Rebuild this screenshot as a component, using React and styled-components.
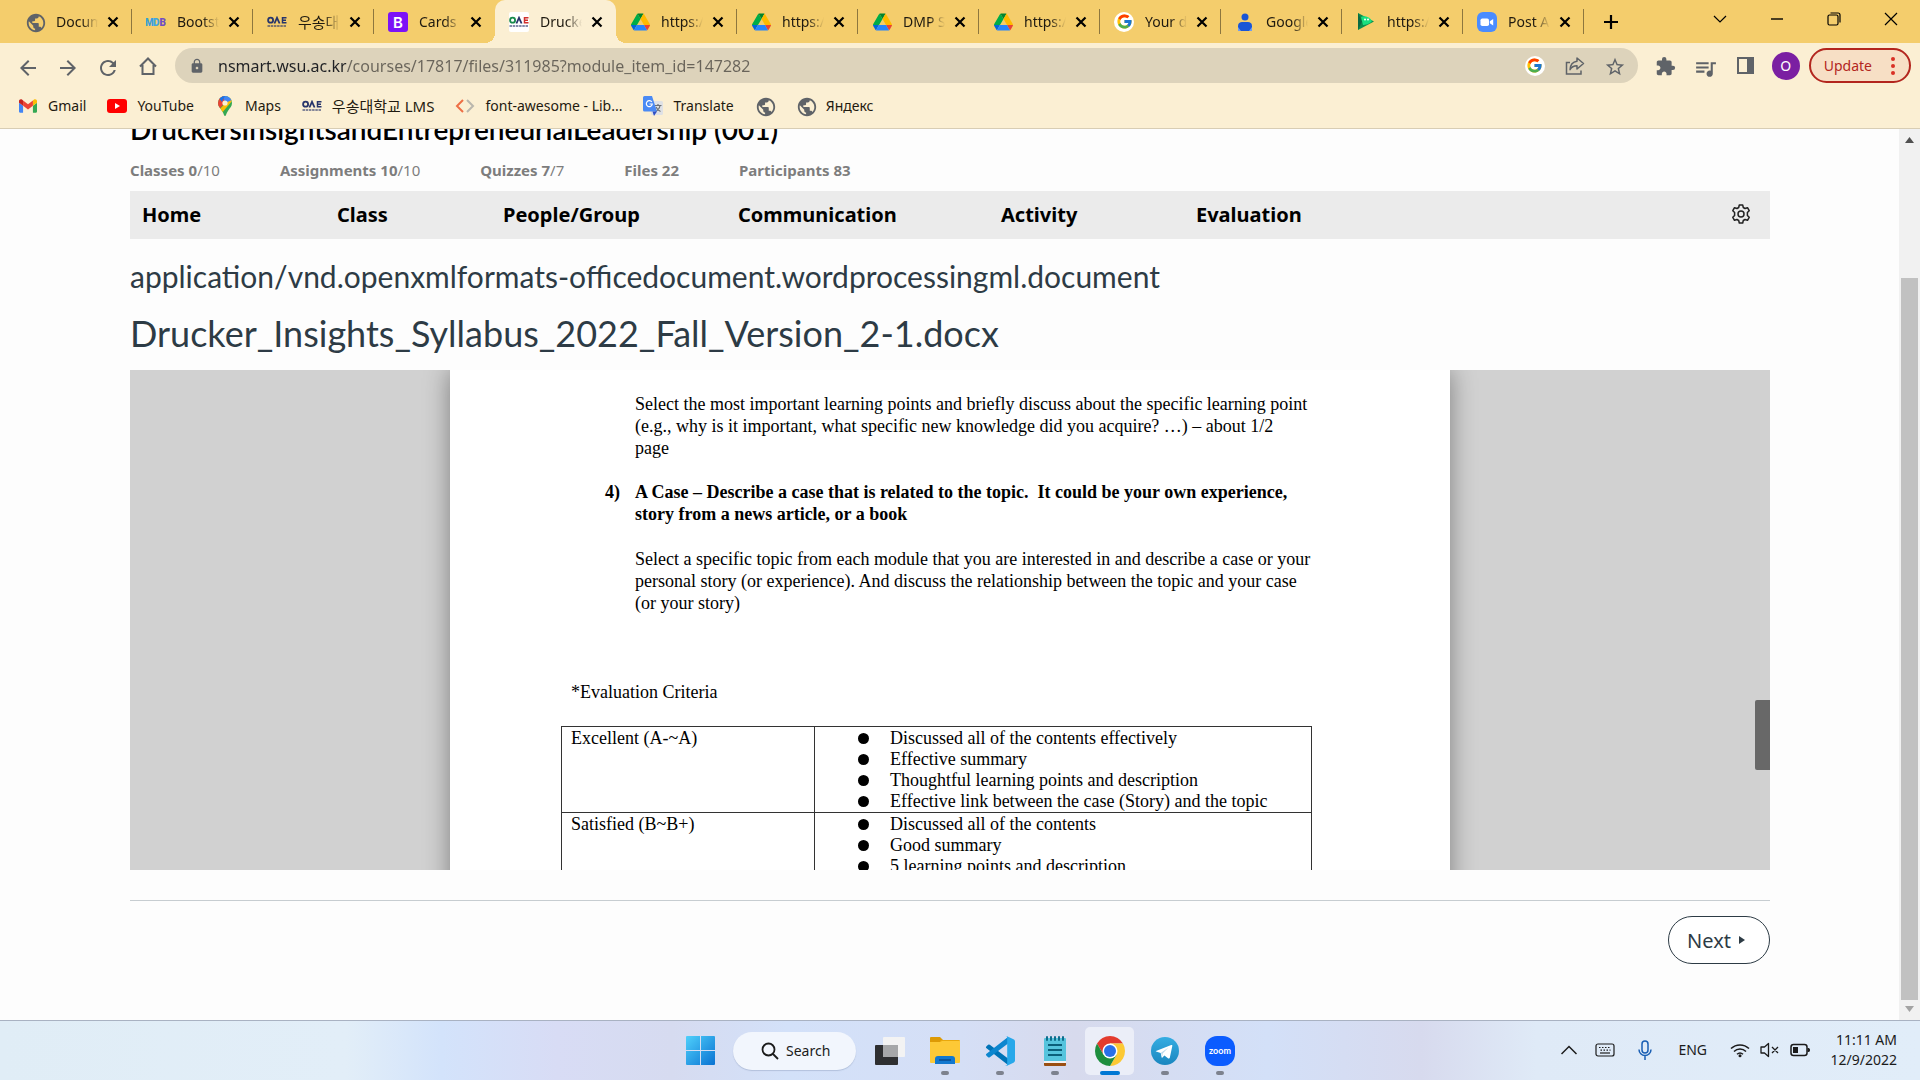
import React from "react";
import styled, { createGlobalStyle, css } from "styled-components";
import { FcGoogle } from "react-icons/fc";
import {
  MdArrowBack,
  MdArrowForward,
  MdRefresh,
  MdLock,
  MdStarBorder,
  MdExtension,
  MdQueueMusic,
  MdPublic,
} from "react-icons/md";

const GlobalStyle = createGlobalStyle`
  *, *::before, *::after { box-sizing: border-box; }
  body { margin: 0; background: #fdfdfd; overflow: hidden; }
  button, input { font: inherit; color: inherit; border: 0; background: none; padding: 0; margin: 0; }
  a { color: inherit; text-decoration: none; }
  svg { display: block; flex: none; }
  h1, h2, p, ul { margin: 0; padding: 0; font-weight: inherit; }
`;

const ui = css`
  font-family: "Noto Sans", "Noto Sans CJK KR", sans-serif;
  font-size: 14px;
`;

/* ---------- window shell ---------- */

const Window = styled.div`
  ${ui}
  display: flex;
  flex-direction: column;
  height: 100vh;
  color: #1f1a10;
`;

const TabStrip = styled.div`
  display: flex;
  align-items: stretch;
  height: 43px;
  padding: 0 1px 0 11px;
  background: #f4cd6c;
`;

const Tab = styled.div`
  position: relative;
  display: flex;
  align-items: center;
  flex: 0 1 121px;
  min-width: 0;
  padding-left: 14px;
  gap: 5px;
  ${(p) =>
    p.$active &&
    css`
      background: #fbefd3;
      border-radius: 10px 10px 0 0;
      &::before,
      &::after {
        content: "";
        position: absolute;
        bottom: 0;
        width: 10px;
        height: 10px;
      }
      &::before {
        left: -10px;
        background: radial-gradient(circle at 0 0, transparent 10px, #fbefd3 10px);
      }
      &::after {
        right: -10px;
        background: radial-gradient(circle at 100% 0, transparent 10px, #fbefd3 10px);
      }
    `}
`;

const TabButton = styled.button`
  display: flex;
  align-items: center;
  gap: 11px;
`;

const TabTitle = styled.span`
  width: 42px;
  overflow: hidden;
  white-space: nowrap;
  text-align: left;
  line-height: 24px;
  mask-image: linear-gradient(90deg, #000 26px, transparent 42px);
  &:lang(ko) {
    font-size: 15px;
  }
`;

const Favicon = styled.span`
  display: grid;
  place-items: center;
  flex: none;
  width: 20px;
  height: 20px;
  border-radius: ${(p) => (p.$round ? "10px" : "2px")};
  background: ${(p) => (p.$white ? "#fff" : "none")};
`;

const IconButton = styled.button`
  display: grid;
  place-items: center;
  flex: none;
  width: ${(p) => p.$w || 20}px;
  height: ${(p) => p.$h || 20}px;
  color: ${(p) => p.$color || "#5f6368"};
`;

const TabDivider = styled.span`
  width: 1px;
  height: 25px;
  margin-left: auto;
  background: #8d763e;
`;

const NewTab = styled(IconButton)`
  width: 54px;
  height: 43px;
`;

const WindowControls = styled.div`
  display: flex;
  margin-left: auto;
  height: 37px;
`;

/* ---------- toolbar ---------- */

const Toolbar = styled.div`
  display: flex;
  align-items: center;
  height: 45px;
  padding: 0 9px 0 8px;
  background: #fbefd3;
`;

const AddressBar = styled.label`
  display: flex;
  align-items: center;
  flex: 1;
  height: 35px;
  margin-left: 7px;
  padding: 0 3px 0 14px;
  border-radius: 18px;
  background: #ddd3bb;
  color: #5f6368;
`;

const AddressInput = styled.input`
  flex: 1;
  min-width: 0;
  margin-left: 13px;
  font-size: 16px;
  line-height: 24px;
  background: linear-gradient(90deg, #202124 128px, #69645a 128px);
  background-clip: text;
  -webkit-background-clip: text;
  color: transparent;
  outline: none;
`;

const AddressActions = styled.div`
  display: flex;
  align-items: center;
  padding-left: 10px;
`;

const ToolbarActions = styled.div`
  display: flex;
  align-items: center;
  margin-left: 8px;
`;

const Avatar = styled.button`
  width: 28px;
  height: 28px;
  margin: 0 9px 0 6px;
  border-radius: 14px;
  background: #7b1fa2;
  color: #fff;
  font-size: 14px;
`;

const UpdateButton = styled.button`
  display: flex;
  align-items: center;
  gap: 18px;
  height: 35px;
  padding: 0 13px;
  border: 2px solid #b3261e;
  border-radius: 18px;
  background: #f7dfc5;
  color: #b3261e;
`;

const Bookmarks = styled.nav`
  display: flex;
  align-items: center;
  gap: 21px;
  height: 41px;
  padding: 0 18px 4px;
  background: #fbefd3;
  border-bottom: 1px solid #d8cdb4;
`;

const Bookmark = styled.a`
  display: flex;
  align-items: center;
  gap: 10px;
  height: 24px;
  line-height: 24px;
  white-space: nowrap;
  color: #1f1a10;
  &:lang(ko) {
    font-size: 15px;
  }
`;

/* ---------- page ---------- */

const Viewport = styled.div`
  display: flex;
  flex: 1;
  min-height: 0;
  overflow: hidden;
  background: #fdfdfd;
`;

const Page = styled.main`
  flex: 1;
  min-width: 0;
  padding: 0 129px 0 130px;
`;

const CourseTitle = styled.h1`
  margin-top: -17px;
  font: 600 28px/34px Lato, sans-serif;
  color: #000;
`;

const Stats = styled.ul`
  display: flex;
  gap: 60px;
  margin-top: 12px;
  list-style: none;
  font-size: 15px;
  line-height: 24px;
  color: #7d7d7d;
`;

const CourseNav = styled.nav`
  display: flex;
  align-items: center;
  height: 48px;
  margin-top: 9px;
  padding: 0 18px 2px 12px;
  background: #ebebeb;
`;

const NavLink = styled.a`
  width: ${(p) => p.$w}px;
  font-size: 20px;
  font-weight: 700;
  color: #000;
`;

const SettingsButton = styled(IconButton)`
  margin-left: auto;
  width: 22px;
`;

const MimeHeading = styled.h2`
  margin-top: 19px;
  font: 400 30px/36px Lato, sans-serif;
  color: #2d3b45;
`;

const FileHeading = styled.h2`
  margin-top: 17px;
  font: 400 36px/44px Lato, sans-serif;
  color: #2d3b45;
`;

const Viewer = styled.section`
  position: relative;
  display: flex;
  justify-content: center;
  height: 500px;
  margin-top: 15px;
  overflow: hidden;
  background: #d1d1d1;
`;

const ViewerThumb = styled.div`
  position: absolute;
  right: 0;
  top: 330px;
  width: 15px;
  height: 70px;
  border-radius: 2px 0 0 2px;
  background: #686868;
`;

const Sheet = styled.article`
  flex: 0 1 1000px;
  height: 600px;
  padding: 23px 111px 0;
  background: #fff;
  box-shadow: 0 0 24px rgba(0, 0, 0, 0.4);
  font: 18px/22px "Liberation Serif", serif;
  color: #000;
`;

const Paragraph = styled.p`
  margin: 0 0 22px 74px;
  white-space: pre-wrap;
`;

const CaseItem = styled.div`
  display: grid;
  grid-template-columns: 30px 1fr;
  margin: 0 0 23px 44px;
  font-weight: 700;
  white-space: pre-wrap;
`;

const CriteriaLabel = styled.p`
  margin: 67px 0 23px 10px;
`;

const CriteriaTable = styled.table`
  width: 750px;
  table-layout: fixed;
  border-collapse: collapse;
  line-height: 21px;
`;

const Cell = styled.td`
  width: ${(p) => p.$w}px;
  padding: 1px 0 0 ${(p) => p.$pad}px;
  border: 1px solid #333;
  vertical-align: top;
`;

const Points = styled.ul`
  list-style: none;
`;

const Point = styled.li`
  display: flex;
  align-items: center;
  gap: 21px;
  &::before {
    content: "";
    width: 11px;
    height: 11px;
    border-radius: 6px;
    background: #000;
  }
`;

const Footer = styled.footer`
  display: flex;
  justify-content: flex-end;
  margin-top: 30px;
  padding-top: 15px;
  border-top: 1px solid #c7cdd1;
`;

const NextButton = styled.button`
  display: flex;
  align-items: center;
  gap: 8px;
  height: 48px;
  padding: 0 24px 0 18px;
  border: 1px solid #2d3b45;
  border-radius: 24px;
  background: #fff;
  font-size: 20px;
  color: #2d3b45;
`;

const ScrollTrack = styled.div`
  display: flex;
  flex-direction: column;
  align-items: center;
  width: 21px;
  padding: 8px 0;
  background: #f1f1f1;
`;

const ScrollThumb = styled.div`
  flex: 1;
  width: 17px;
  margin: 135px 0 6px;
  background: #c1c1c1;
`;

/* ---------- taskbar ---------- */

const Taskbar = styled.footer`
  display: grid;
  grid-template-columns: 1fr auto 1fr;
  height: 60px;
  border-top: 1px solid #a9b2c2;
  background: linear-gradient(90deg, #e0edf6 0%, #e2eef8 18%, #d3e3fb 23%, #d8dcf5 29%, #d6dbf0 35%, #d3e1f9 41%, #d5dff6 50%, #d7daed 56%, #d3e0f8 66%, #d7daee 74%, #dfeaf7 80%, #e1edf9 100%);
  color: #1b1b1b;
`;

const Apps = styled.div`
  grid-column: 2;
  display: flex;
  align-items: center;
`;

const AppButton = styled.button`
  position: relative;
  display: grid;
  place-items: center;
  width: 49px;
  height: 48px;
  margin: 0 3px;
  border-radius: 5px;
  background: ${(p) => (p.$active ? "#ebeef8" : "none")};
  ${(p) =>
    p.$running &&
    css`
      &::after {
        content: "";
        position: absolute;
        left: 50%;
        bottom: 0;
        width: ${p.$active ? 20 : 8}px;
        height: 4px;
        border-radius: 2px;
        transform: translateX(-50%);
        background: ${p.$active ? "#0078d4" : "#7d828e"};
      }
    `}
`;

const SearchButton = styled.button`
  display: flex;
  align-items: center;
  gap: 7px;
  width: 123px;
  height: 38px;
  margin: 0 6px 0 5px;
  padding-left: 28px;
  border-radius: 19px;
  background: #f2f6fd;
  box-shadow: 0 1px 1px rgba(80, 100, 140, 0.25);
`;

const Tray = styled.div`
  grid-column: 3;
  display: flex;
  align-items: center;
  justify-content: flex-end;
  padding: 0 23px 2px 0;
`;

const TrayButton = styled.button`
  display: flex;
  align-items: center;
  justify-content: center;
  gap: 10px;
  height: 40px;
  margin-right: ${(p) => p.$gap}px;
`;

const Clock = styled.button`
  width: 68px;
  text-align: right;
  line-height: 20px;
  white-space: nowrap;
`;

/* ---------- drawings ---------- */

const Stroke = ({ w = 20, h = w, box = "0 0 20 20", sw = 1, children, ...rest }) => (
  <svg width={w} height={h} viewBox={box} fill="none" stroke="currentColor" strokeWidth={sw} aria-hidden="true" {...rest}>
    {children}
  </svg>
);

const DriveIcon = () => (
  <svg width="19" height="18" viewBox="0 0 87.3 78" aria-hidden="true">
    <path fill="#0066da" d="m6.6 66.85 3.85 6.65c.8 1.4 1.95 2.5 3.3 3.3l13.75-23.8h-27.5c0 1.55.4 3.1 1.2 4.5z" />
    <path fill="#00ac47" d="m43.65 25-13.75-23.8c-1.35.8-2.5 1.9-3.3 3.3l-25.4 44a9.06 9.06 0 0 0-1.2 4.5h27.5z" />
    <path fill="#ea4335" d="m73.55 76.8c1.35-.8 2.5-1.9 3.3-3.3l1.6-2.75 7.65-13.25c.8-1.4 1.2-2.95 1.2-4.5h-27.5l5.85 11.5z" />
    <path fill="#00832d" d="m43.65 25 13.75-23.8c-1.35-.8-2.9-1.2-4.5-1.2h-18.5c-1.6 0-3.15.45-4.5 1.2z" />
    <path fill="#2684fc" d="m59.8 53h-32.3l-13.75 23.8c1.35.8 2.9 1.2 4.5 1.2h50.8c1.6 0 3.15-.45 4.5-1.2z" />
    <path fill="#ffba00" d="m73.4 26.5-12.7-22c-.8-1.4-1.95-2.5-3.3-3.3l-13.75 23.8 16.15 28h27.45c0-1.55-.4-3.1-1.2-4.5z" />
  </svg>
);

const GmailIcon = () => (
  <svg width="18" height="14" viewBox="52 42 88 66" aria-hidden="true">
    <path fill="#4285f4" d="M58 108h14V74L52 59v43c0 3.32 2.69 6 6 6" />
    <path fill="#34a853" d="M120 108h14c3.32 0 6-2.69 6-6V59l-20 15" />
    <path fill="#fbbc04" d="M120 48v26l20-15v-8c0-7.42-8.47-11.65-14.4-7.2" />
    <path fill="#ea4335" d="M72 74V48l24 18 24-18v26L96 92" />
    <path fill="#c5221f" d="M52 51v8l20 15V48l-5.6-4.2c-5.94-4.45-14.4-.22-14.4 7.2" />
  </svg>
);

const YouTubeIcon = () => (
  <svg width="20" height="14" viewBox="0 0 20 14" aria-hidden="true">
    <rect width="20" height="14" rx="3" fill="#f00" />
    <path d="M8 4l5 3-5 3z" fill="#fff" />
  </svg>
);

const MapsIcon = () => (
  <svg width="14" height="20" viewBox="0 0 14 20" aria-hidden="true">
    <clipPath id="pin">
      <path d="M7 0a7 7 0 0 1 7 7c0 3.2-2 5-3.600 7.200C9.200 16 8.400 17.500 8 19c-.3 1.300-1.700 1.300-2 0-.4-1.500-1.200-3-2.400-4.800C2 12 0 10.200 0 7a7 7 0 0 1 7-7z" />
    </clipPath>
    <g clipPath="url(#pin)">
      <path d="M0 0h14v20H0z" fill="#34a853" />
      <path d="M0 15L14 0v5L3 18z" fill="#fbbc04" />
      <path d="M4 0h10v4L7 7z" fill="#4285f4" />
      <path d="M0 0h5l2 7-5 5-4-2z" fill="#ea4335" />
      <path d="M1 2L5 0h2l-3 6z" fill="#1a73e8" />
    </g>
    <circle cx="7" cy="7" r="2.600" fill="#fbefd3" />
  </svg>
);

const SchoolIcon = ({ colors = ["#27356b", "#27356b", "#27356b"] }) => (
  <svg width="20" height="12" viewBox="0 0 20 12" aria-hidden="true">
    <g fill="none" strokeWidth="1.800">
      <circle cx="3.600" cy="4.200" r="2.500" stroke={colors[0]} />
      <path d="M7.400 7.500L10 1.800l2.600 5.700" stroke={colors[1]} />
      <path d="M19.500 1.800h-4v5h4M15.500 4.300h3.500" stroke={colors[2]} strokeWidth="1.500" />
    </g>
    <path d="M0.500 10h19" stroke="#27356b" strokeWidth="1.500" strokeDasharray="2.500 .7" opacity=".75" />
  </svg>
);

const MdbIcon = () => (
  <svg width="20" height="12" viewBox="0 0 20 12" fontFamily="Roboto, sans-serif" fontWeight="900" fontSize="10" aria-hidden="true">
    <text x="-1" y="10" fill="#3b9fd8">M</text>
    <text x="7" y="10" fill="#3fa6e0">D</text>
    <text x="13.500" y="10" fill="#6f4fc4">B</text>
  </svg>
);

const BootstrapIcon = () => (
  <svg width="20" height="20" viewBox="0 0 20 20" aria-hidden="true">
    <rect width="20" height="20" rx="3" fill="#7c12f7" />
    <text x="10" y="15.500" textAnchor="middle" fill="#fff" fontFamily="Inter, sans-serif" fontWeight="600" fontSize="15">B</text>
  </svg>
);

const PersonIcon = () => (
  <svg width="16" height="18" viewBox="0 0 16 18" aria-hidden="true">
    <circle cx="8" cy="4" r="3.500" fill="#1a56d6" />
    <path d="M1 18v-5c0-3 2-4 4-4h6c2 0 4 1 4 4v5z" fill="#1a56d6" />
    <path d="M1 14l3 4H1zM15 14l-3 4h3z" fill="#6f9df2" />
  </svg>
);

const PlayIcon = () => (
  <svg width="18" height="19" viewBox="0 0 18 19" aria-hidden="true">
    <path d="M1 1v17L17 9.500z" fill="#0b8f4d" />
    <path d="M1 1l4 8.500L1 18z" fill="#0a6b43" />
    <path d="M4 5c3-2 9 0 11 4-2 3-7 4-9 4z" fill="#18e07f" />
    <circle cx="8" cy="7.500" r="1" fill="#fff" />
    <circle cx="11" cy="7.500" r="1" fill="#fff" />
  </svg>
);

const ZoomCamIcon = () => (
  <svg width="20" height="20" viewBox="0 0 20 20" aria-hidden="true">
    <rect width="20" height="20" rx="6" fill="#4a8cff" />
    <rect x="3.500" y="6.500" width="8.500" height="7.500" rx="1.800" fill="#fff" />
    <path d="M12.800 9.300l3.400-2.300v6.500l-3.400-2.300z" fill="#fff" />
  </svg>
);

const CodeIcon = () => (
  <svg width="20" height="14" viewBox="0 0 20 14" fill="none" strokeWidth="2" aria-hidden="true">
    <path d="M8 1L2 7l6 6" stroke="#ee6f45" />
    <path d="M12 1l6 6-6 6" stroke="#b9b6ad" />
  </svg>
);

const TranslateIcon = () => (
  <svg width="20" height="20" viewBox="0 0 20 20" aria-hidden="true">
    <rect x="8" y="5" width="12" height="14" rx="1.500" fill="#dfe1e5" />
    <path d="M12 9.500h6.500M15 8v1.500M17 9.500c-.5 3-2.500 5-4.500 6M13 11c1 2 3 4 4.500 4.500" stroke="#6b7075" strokeWidth="1.200" fill="none" />
    <path d="M1.500 0H9l5 15.500H1.500A1.500 1.500 0 0 1 0 14V1.500A1.500 1.500 0 0 1 1.500 0z" fill="#4a8af4" />
    <path d="M9.500 15.500H14L11 20z" fill="#2f4fc4" />
    <path d="M8.800 6A3 3 0 1 0 9.300 8H6.500" stroke="#fff" strokeWidth="1.200" fill="none" />
  </svg>
);

const HomeIcon = () => (
  <Stroke w={20} sw={2}>
    <path d="M2 10.500L10 2.500l8 8M4.500 9v9h11V9" />
  </Stroke>
);

const ShareIcon = () => (
  <Stroke w={20} sw={1.5}>
    <path d="M5 6.500H1.500V18H16v-3.500" />
    <path d="M12 2l6.500 5.500L12 13v-3.300c-3.500 0-5.500 1-7 4 .3-5 3-8 7-8.500z" strokeLinejoin="round" />
  </Stroke>
);

const PanelIcon = () => (
  <svg width="19" height="19" viewBox="0 0 19 19" aria-hidden="true">
    <path fillRule="evenodd" d="M1 1h17v17H1zM3 3v13h8V3z" fill="#5f6368" />
  </svg>
);

const GearIcon = () => (
  <Stroke w={20} sw={1.5} strokeLinejoin="round">
    <circle cx="10" cy="10" r="3" />
    <path d="M8.300 1h3.400l.6 2.500 1.700 1 2.500-.8 1.700 3-1.800 1.800v2.900l1.800 1.900-1.700 3-2.500-.8-1.700 1-.6 2.500H8.300l-.6-2.500-1.700-1-2.500.8-1.700-3 1.800-1.900V8.500L1.800 6.700l1.700-3 2.500.8 1.700-1z" />
  </Stroke>
);

const WindowsIcon = () => (
  <svg width="29" height="29" viewBox="0 0 29 29" aria-hidden="true">
    <linearGradient id="win" x1="0" y1="0" x2="1" y2="1">
      <stop offset="0" stopColor="#4fd0fb" />
      <stop offset="1" stopColor="#0a72d2" />
    </linearGradient>
    <path fill="url(#win)" d="M1 0h13v14H0V1a1 1 0 0 1 1-1zM15 0h13a1 1 0 0 1 1 1v13H15zM0 15h14v14H1a1 1 0 0 1-1-1zM15 15h14v13a1 1 0 0 1-1 1H15z" />
  </svg>
);

const TaskViewIcon = () => (
  <svg width="30" height="28" viewBox="0 0 30 28" aria-hidden="true">
    <rect x="0" y="8" width="23" height="20" rx="1" fill="#2e2f31" />
    <rect x="8" y="0" width="22" height="20" rx="1" fill="#f3f3f3" />
    <path d="M8 8h15v12H8z" fill="#a6a7a9" />
  </svg>
);

const FolderIcon = () => (
  <svg width="30" height="27" viewBox="0 0 30 27" aria-hidden="true">
    <path d="M1 0h9l3 3v3H0V1a1 1 0 0 1 1-1z" fill="#dd9a05" />
    <path d="M11 3h18a1 1 0 0 1 1 1v4H8z" fill="#e9a80c" />
    <path d="M0 5h10l2-1h18v21a1 1 0 0 1-1 1H1a1 1 0 0 1-1-1z" fill="#fdc936" />
    <path d="M5 27v-5a3 3 0 0 1 3-3h14a3 3 0 0 1 3 3v5z" fill="#1278cf" />
    <path d="M9 23h12" stroke="#0a4a8c" strokeWidth="1.500" />
  </svg>
);

const CodeEditorIcon = () => (
  <svg width="30" height="30" viewBox="0 0 30 30" aria-hidden="true">
    <path d="M1.300 10.500l1.800-1.700a1.300 1.300 0 0 1 1.700 0L23 22.500V29L1.200 11.900a1 1 0 0 1 .1-1.400z" fill="#0073b7" />
    <path d="M1.300 19.500l1.800 1.700a1.300 1.300 0 0 0 1.700 0L23 7.500V1L1.200 18.100a1 1 0 0 0 .1 1.400z" fill="#0c86cf" />
    <path d="M22 .3L28.500 3.300A2.500 2.500 0 0 1 30 5.500v19a2.500 2.500 0 0 1-1.500 2.200L22 29.800c-.7.3-1.500.1-2-.4 1 .7 2.200 0 2.200-1.200V1.800C22.200.6 21 0 20 .6c.5-.5 1.300-.6 2-.3z" fill="#28a8ea" />
  </svg>
);

const NotepadIcon = () => (
  <svg width="22" height="30" viewBox="0 0 22 30" aria-hidden="true">
    <rect x="0" y="26" width="22" height="4" rx="1" fill="#9a4f12" />
    <rect x="0" y="24" width="22" height="3" fill="#f2f2f2" />
    <path d="M0 3a1 1 0 0 1 1-1h20a1 1 0 0 1 1 1v22H0z" fill="#56c4dd" />
    <path d="M4 9h14M4 14h14M4 19h14" stroke="#0b5f7a" strokeWidth="2" />
    <path d="M3 1v3M7 1v3M11 1v3M15 1v3M19 1v3" stroke="#0e6d8c" strokeWidth="2" strokeLinecap="round" />
  </svg>
);

const ChromeIcon = () => (
  <svg width="30" height="30" viewBox="2 2 44 44" aria-hidden="true">
    <path fill="#e33b2e" d="M4.950 13A22 22 0 0 1 43.050 13H24v11l-9.530 5.500z" />
    <path fill="#fcc934" d="M43.050 13A22 22 0 0 1 24 46l9.530-16.500L24 24V13z" />
    <path fill="#1e8e3e" d="M24 46A22 22 0 0 1 4.950 13l9.520 16.500L24 24l9.530 5.500z" />
    <circle cx="24" cy="24" r="11" fill="#fff" />
    <circle cx="24" cy="24" r="8.800" fill="#2a70e8" />
  </svg>
);

const TelegramIcon = () => (
  <svg width="28" height="28" viewBox="0 0 28 28" aria-hidden="true">
    <linearGradient id="tg" x1="0" y1="0" x2="0" y2="1">
      <stop offset="0" stopColor="#35ade2" />
      <stop offset="1" stopColor="#1a86bf" />
    </linearGradient>
    <circle cx="14" cy="14" r="14" fill="url(#tg)" />
    <path d="M5 14l15.200-6c.8-.3 1.300.2 1.100 1.100l-2.500 11.700c-.2.800-.8 1-1.500.6L13.400 18.500l-1.900 2c-.4.4-.8.3-.9-.3l-.9-4.200L5.100 14.600c-.5-.2-.5-.4-.1-.6z" fill="#fff" />
    <path d="M10 15.800l7.500-5.300-5.900 6-.3 3z" fill="#b9d8ea" />
  </svg>
);

const ZoomIcon = () => (
  <svg width="30" height="30" viewBox="0 0 30 30" aria-hidden="true">
    <rect width="30" height="30" rx="12" fill="#0b5cff" />
    <text x="15" y="18" textAnchor="middle" fill="#fff" fontFamily="Lato, sans-serif" fontWeight="700" fontSize="9">zoom</text>
  </svg>
);

const WifiIcon = () => (
  <Stroke w={20} h={16} box="0 0 20 16" sw={1.5}>
    <path d="M1 6.500a13 13 0 0 1 18 0M4 9.500a8.500 8.500 0 0 1 12 0M7 12.300a4.500 4.500 0 0 1 6 0" />
    <circle cx="10" cy="13.800" r="1.500" fill="currentColor" stroke="none" />
  </Stroke>
);

const SpeakerIcon = () => (
  <Stroke w={20} h={16} box="0 0 20 16" sw={1.3}>
    <path d="M1 5h3.500L8.500 1.500v13L4.500 11H1zM12 5l6 6M18 5l-6 6" strokeLinejoin="round" />
  </Stroke>
);

const BatteryIcon = () => (
  <Stroke w={20} h={14} box="0 0 20 14" sw={1.5}>
    <rect x="1" y="1.500" width="16" height="11" rx="2.500" />
    <path d="M3 4h5v6H3zM17.500 5h1c1 0 1.500 1 1.500 2s-.5 2-1.500 2h-1z" fill="currentColor" stroke="none" />
  </Stroke>
);

const KeyboardIcon = () => (
  <Stroke w={20} h={14} box="0 0 20 14" sw={1.2}>
    <rect x="1" y="1" width="18" height="12" rx="2" />
    <path d="M4 4.500h12M5.500 7.200h10" strokeDasharray="1.500 1.500" />
    <path d="M5 10h10" />
  </Stroke>
);

const MicIcon = () => (
  <Stroke w={14} h={20} box="0 0 14 20" sw={1.5} color="#1a5fb4">
    <rect x="4" y="1" width="6" height="12" rx="3" />
    <path d="M1 9.500a6 6 0 0 0 12 0M7 16v4" />
  </Stroke>
);

/* ---------- data ---------- */

const tabs = [
  { title: "Document", icon: <MdPublic size={22} color="#5f6368" /> },
  { title: "Bootstrap", icon: <MdbIcon /> },
  { title: "우송대학교", lang: "ko", icon: <SchoolIcon /> },
  { title: "Cards ·", icon: <BootstrapIcon /> },
  { title: "Drucker_I", icon: <SchoolIcon colors={["#178a4c", "#27356b", "#d0312d"]} />, white: true, active: true },
  { title: "https://d", icon: <DriveIcon /> },
  { title: "https://d", icon: <DriveIcon /> },
  { title: "DMP Sm", icon: <DriveIcon /> },
  { title: "https://d", icon: <DriveIcon /> },
  { title: "Your dat", icon: <FcGoogle size={17} />, white: true, round: true },
  { title: "Google", icon: <PersonIcon /> },
  { title: "https://p", icon: <PlayIcon /> },
  { title: "Post Att", icon: <ZoomCamIcon /> },
];

const bookmarks = [
  { label: "Gmail", icon: <GmailIcon /> },
  { label: "YouTube", icon: <YouTubeIcon /> },
  { label: "Maps", icon: <MapsIcon /> },
  { label: "우송대학교 LMS", lang: "ko", icon: <SchoolIcon /> },
  { label: "font-awesome - Lib...", icon: <CodeIcon /> },
  { label: "Translate", icon: <TranslateIcon /> },
  { label: "", icon: <MdPublic size={22} color="#5f6368" /> },
  { label: "Яндекс", icon: <MdPublic size={22} color="#5f6368" /> },
];

const stats = [
  ["Classes 0", "/10"],
  ["Assignments 10", "/10"],
  ["Quizzes 7", "/7"],
  ["Files 22", ""],
  ["Participants 83", ""],
];

const navItems = [
  ["Home", 195],
  ["Class", 166],
  ["People/Group", 235],
  ["Communication", 263],
  ["Activity", 195],
  ["Evaluation", 106],
];

const criteria = [
  {
    grade: "Excellent (A-~A)",
    points: [
      "Discussed all of the contents effectively",
      "Effective summary",
      "Thoughtful learning points and description",
      "Effective link between the case (Story) and the topic",
    ],
  },
  {
    grade: "Satisfied (B~B+)",
    points: ["Discussed all of the contents", "Good summary", "5 learning points and description"],
  },
];

const apps = [
  { name: "File Explorer", icon: <FolderIcon />, running: true },
  { name: "Code editor", icon: <CodeEditorIcon />, running: true },
  { name: "Notepad", icon: <NotepadIcon />, running: true },
  { name: "Chrome", icon: <ChromeIcon />, running: true, active: true },
  { name: "Telegram", icon: <TelegramIcon />, running: true },
  { name: "Zoom", icon: <ZoomIcon />, running: true },
];

/* ---------- sections ---------- */

function BrowserTabs() {
  return (
    <TabStrip>
      {tabs.map((t, i) => (
        <Tab key={i} $active={t.active}>
          <TabButton>
            <Favicon $white={t.white} $round={t.round}>{t.icon}</Favicon>
            <TabTitle lang={t.lang}>{t.title}</TabTitle>
          </TabButton>
          <IconButton aria-label="Close tab" $color="#000">
            <Stroke w={12} box="0 0 12 12" sw={2.2}><path d="M1.500 1.500l9 9M10.500 1.500l-9 9" /></Stroke>
          </IconButton>
          {!t.active && !(tabs[i + 1] && tabs[i + 1].active) && <TabDivider />}
        </Tab>
      ))}
      <NewTab aria-label="New tab" $color="#000">
        <Stroke w={16} box="0 0 16 16" sw={2.2}><path d="M8 1v14M1 8h14" /></Stroke>
      </NewTab>
      <WindowControls>
        <IconButton $w={57} $h={37} aria-label="Search tabs" $color="#000">
          <Stroke w={14} box="0 0 14 14" sw={1.2}><path d="M1 4l6 6 6-6" /></Stroke>
        </IconButton>
        <IconButton $w={57} $h={37} aria-label="Minimize" $color="#000">
          <Stroke w={14} box="0 0 14 14" sw={1.4}><path d="M1 7h12" /></Stroke>
        </IconButton>
        <IconButton $w={57} $h={37} aria-label="Restore" $color="#000">
          <Stroke w={14} box="0 0 14 14" sw={1.2}>
            <rect x="1" y="3" width="10" height="10" rx="1.500" />
            <path d="M3.500 1H11a2 2 0 0 1 2 2v7.500" />
          </Stroke>
        </IconButton>
        <IconButton $w={57} $h={37} aria-label="Close" $color="#000">
          <Stroke w={14} box="0 0 14 14" sw={1.2}><path d="M1 1l12 12M13 1L1 13" /></Stroke>
        </IconButton>
      </WindowControls>
    </TabStrip>
  );
}

function BrowserToolbar() {
  return (
    <Toolbar>
      <IconButton $w={40} aria-label="Back"><MdArrowBack size={24} /></IconButton>
      <IconButton $w={40} aria-label="Forward"><MdArrowForward size={24} /></IconButton>
      <IconButton $w={40} aria-label="Reload"><MdRefresh size={24} /></IconButton>
      <IconButton $w={40} aria-label="Home"><HomeIcon /></IconButton>
      <AddressBar>
        <MdLock size={16} />
        <AddressInput
          aria-label="Address"
          defaultValue="nsmart.wsu.ac.kr/courses/17817/files/311985?module_item_id=147282"
        />
        <Favicon $white $round><FcGoogle size={17} /></Favicon>
        <AddressActions>
          <IconButton $w={40} aria-label="Share"><ShareIcon /></IconButton>
          <IconButton $w={40} aria-label="Bookmark"><MdStarBorder size={22} /></IconButton>
        </AddressActions>
      </AddressBar>
      <ToolbarActions>
        <IconButton $w={40} aria-label="Extensions"><MdExtension size={21} /></IconButton>
        <IconButton $w={40} aria-label="Media"><MdQueueMusic size={25} /></IconButton>
        <IconButton $w={40} aria-label="Side panel"><PanelIcon /></IconButton>
        <Avatar>O</Avatar>
        <UpdateButton>
          Update
          <svg width="6" height="20" viewBox="0 0 6 20" fill="#d93025" aria-hidden="true">
            <circle cx="3" cy="3" r="2" /><circle cx="3" cy="10" r="2" /><circle cx="3" cy="17" r="2" />
          </svg>
        </UpdateButton>
      </ToolbarActions>
    </Toolbar>
  );
}

function DocumentSheet() {
  return (
    <Sheet>
      <Paragraph>
        Select the most important learning points and briefly discuss about the specific learning point<br />
        (e.g., why is it important, what specific new knowledge did you acquire? …) – about 1/2<br />
        page
      </Paragraph>
      <CaseItem>
        <span>4)</span>
        <span>
          {"A Case – Describe a case that is related to the topic.  It could be your own experience,"}<br />
          story from a news article, or a book
        </span>
      </CaseItem>
      <Paragraph>
        Select a specific topic from each module that you are interested in and describe a case or your<br />
        personal story (or experience). And discuss the relationship between the topic and your case<br />
        (or your story)
      </Paragraph>
      <CriteriaLabel>*Evaluation Criteria</CriteriaLabel>
      <CriteriaTable>
        <tbody>
          {criteria.map((row) => (
            <tr key={row.grade}>
              <Cell $w={253} $pad={9}>{row.grade}</Cell>
              <Cell $w={497} $pad={43}>
                <Points>
                  {row.points.map((p) => <Point key={p}>{p}</Point>)}
                </Points>
              </Cell>
            </tr>
          ))}
        </tbody>
      </CriteriaTable>
    </Sheet>
  );
}

function CoursePage() {
  return (
    <Page>
      <CourseTitle>DruckersInsightsandEntrepreneurialLeadership (001)</CourseTitle>
      <Stats>
        {stats.map(([label, total]) => (
          <li key={label}><b>{label}</b>{total}</li>
        ))}
      </Stats>
      <CourseNav>
        {navItems.map(([label, w]) => <NavLink key={label} href="#" $w={w}>{label}</NavLink>)}
        <SettingsButton aria-label="Settings" $color="#222"><GearIcon /></SettingsButton>
      </CourseNav>
      <MimeHeading>application/vnd.openxmlformats-officedocument.wordprocessingml.document</MimeHeading>
      <FileHeading>Drucker_Insights_Syllabus_2022_Fall_Version_2-1.docx</FileHeading>
      <Viewer>
        <DocumentSheet />
        <ViewerThumb />
      </Viewer>
      <Footer>
        <NextButton>
          Next
          <svg width="6" height="8" viewBox="0 0 6 8" fill="#2d3b45" aria-hidden="true"><path d="M0 0l6 4-6 4z" /></svg>
        </NextButton>
      </Footer>
    </Page>
  );
}

function SystemTaskbar() {
  return (
    <Taskbar>
      <Apps>
        <AppButton aria-label="Start"><WindowsIcon /></AppButton>
        <SearchButton>
          <Stroke w={18} box="0 0 18 18" sw={1.8}><circle cx="7.500" cy="7.500" r="6" /><path d="M12 12l5 5" /></Stroke>
          Search
        </SearchButton>
        <AppButton aria-label="Task view"><TaskViewIcon /></AppButton>
        {apps.map((a) => (
          <AppButton key={a.name} aria-label={a.name} $running={a.running} $active={a.active}>{a.icon}</AppButton>
        ))}
      </Apps>
      <Tray>
        <TrayButton $gap={18} aria-label="Hidden icons">
          <Stroke w={16} h={10} box="0 0 16 10" sw={1.5}><path d="M.5 9L8 1.500 15.500 9" /></Stroke>
        </TrayButton>
        <TrayButton $gap={23} aria-label="Keyboard"><KeyboardIcon /></TrayButton>
        <TrayButton $gap={26} aria-label="Microphone"><MicIcon /></TrayButton>
        <TrayButton $gap={23}>ENG</TrayButton>
        <TrayButton $gap={19} aria-label="Network, sound, battery"><WifiIcon /><SpeakerIcon /><BatteryIcon /></TrayButton>
        <Clock>11:11 AM<br />12/9/2022</Clock>
      </Tray>
    </Taskbar>
  );
}

export default function App() {
  return (
    <Window>
      <GlobalStyle />
      <BrowserTabs />
      <BrowserToolbar />
      <Bookmarks>
        {bookmarks.map((b, i) => (
          <Bookmark key={i} href="#" lang={b.lang} aria-label={b.label || "Bookmark"}>
            <Favicon>{b.icon}</Favicon>
            {b.label}
          </Bookmark>
        ))}
      </Bookmarks>
      <Viewport>
        <CoursePage />
        <ScrollTrack>
          <svg width="9" height="6" viewBox="0 0 9 6" fill="#505050" aria-hidden="true"><path d="M4.500 0L9 6H0z" /></svg>
          <ScrollThumb />
          <svg width="9" height="6" viewBox="0 0 9 6" fill="#a3a3a3" aria-hidden="true"><path d="M4.500 6L9 0H0z" /></svg>
        </ScrollTrack>
      </Viewport>
      <SystemTaskbar />
    </Window>
  );
}
